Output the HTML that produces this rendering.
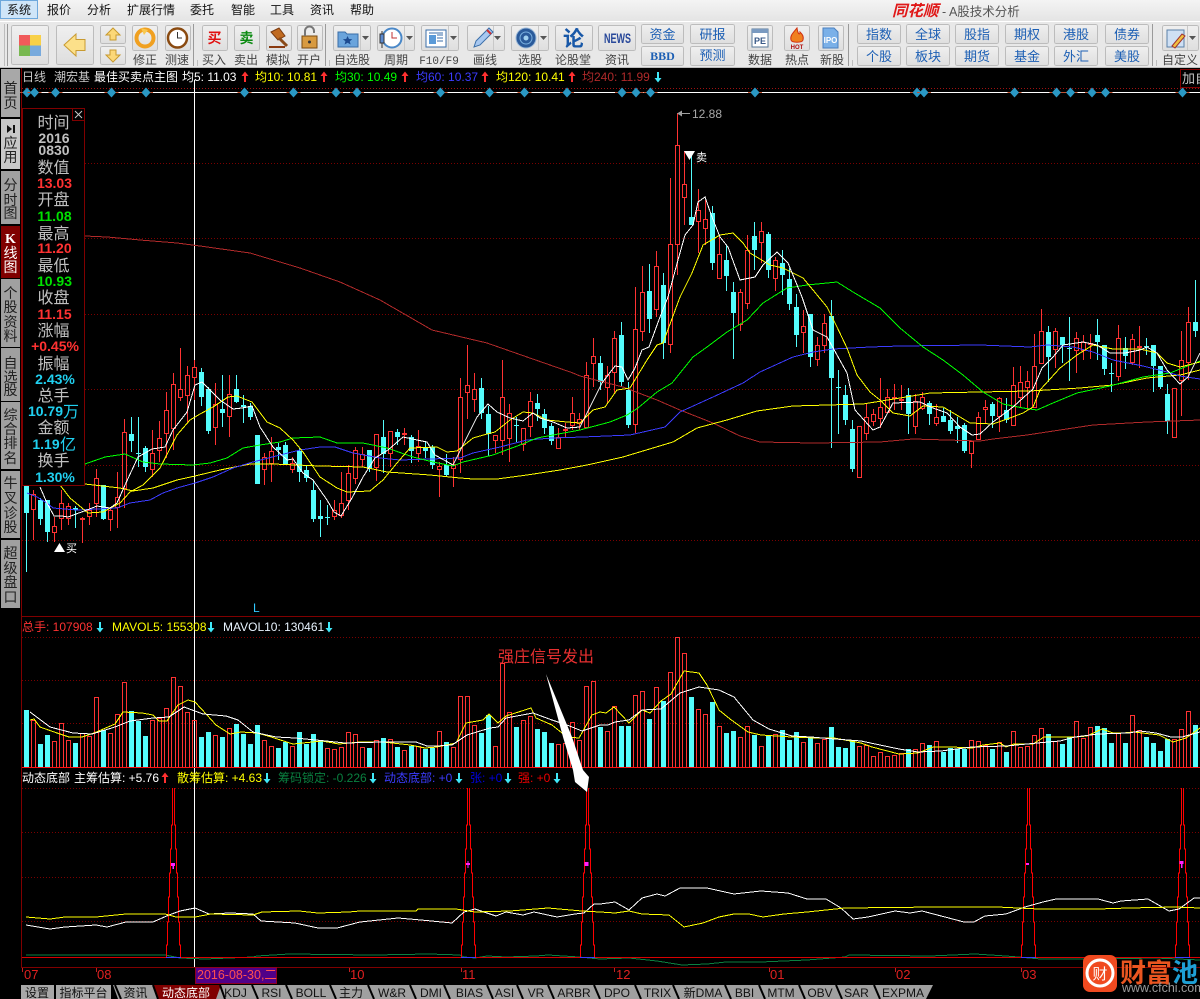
<!DOCTYPE html>
<html><head><meta charset="utf-8"><title>同花顺 A股技术分析</title>
<style>
html,body{margin:0;padding:0;background:#000;width:1200px;height:999px;overflow:hidden}
svg{display:block}
text{font-family:"Liberation Sans","Noto Sans CJK SC",sans-serif;font-size:12px}
.l{fill:#444;text-anchor:middle;font-size:12px}
.m{fill:#111;font-size:12px}
.b{fill:#1c5fb4;text-anchor:middle;font-size:13px}
.t{fill:#222;text-anchor:middle;font-size:14px}
.g{fill:#c0c0c0;text-anchor:middle;font-size:16px}
.n{font-weight:bold;text-anchor:middle;font-size:14px}
.k{fill:#111;text-anchor:middle;font-size:12px}
.a{fill:#e02020;font-size:13px}
</style></head><body>
<svg width="1200" height="999" viewBox="0 0 1200 999" xmlns="http://www.w3.org/2000/svg">
<defs>
<linearGradient id="mg" x1="0" y1="0" x2="0" y2="1"><stop offset="0" stop-color="#f4f4f4"/><stop offset="1" stop-color="#e4e4e4"/></linearGradient>
<linearGradient id="bg" x1="0" y1="0" x2="0" y2="1"><stop offset="0" stop-color="#f0f0f0"/><stop offset="1" stop-color="#dedede"/></linearGradient>
<path id="up" d="M0-5.500L3.500-1H1V5H-1V-1H-3.500z" fill="#ff3030"/>
<path id="dn" d="M0 5.500L3.500 1H1V-5H-1V1H-3.500z" fill="#40e8f8"/>
<g id="dm"><path d="M-7 0H7" stroke="#c05030"/><path d="M0-5L4.500 0 0 5-4.500 0z" fill="#2a98c4"/></g>
<path id="sp" fill="none" stroke="#ff0000" shape-rendering="crispEdges" d="M-7 957V945H-6V922H-5V897H-4V873H-3V849H-2V825H-1V788M7 957V945H6V922H5V897H4V873H3V849H2V825H1V788"/>
</defs>

<!-- menu + toolbar -->
<rect width="1200" height="21" fill="url(#mg)"/>
<rect y="21" width="1200" height="47" fill="#e8e8e8"/>
<path d="M0 21.500H1200" stroke="#fff"/><path d="M0 67.500H1200" stroke="#bdbdbd"/>
<rect x=".5" y=".5" width="37" height="18" fill="#cfe5f8" stroke="#6ea8dc"/>
<text class="m" x="7" y="14">系统</text><text class="m" x="47" y="14">报价</text><text class="m" x="87" y="14">分析</text><text class="m" x="127" y="14">扩展行情</text><text class="m" x="190" y="14">委托</text><text class="m" x="231" y="14">智能</text><text class="m" x="270" y="14">工具</text><text class="m" x="310" y="14">资讯</text><text class="m" x="350" y="14">帮助</text>
<text x="892" y="16" style="font-size:15.500px;font-weight:bold;font-style:italic;fill:#e01818">同花顺</text>
<text x="942" y="16" style="font-size:12.500px;fill:#555">- A股技术分析</text>

<g fill="url(#bg)" stroke="#bcbcbc" shape-rendering="crispEdges">
<rect x="11.500" y="25.500" width="37" height="39" rx="2"/><rect x="56.500" y="25.500" width="37" height="39" rx="2"/>
<rect x="100.500" y="25.500" width="25" height="18" rx="2"/><rect x="100.500" y="46.500" width="25" height="18" rx="2"/>
<rect x="132.500" y="25.500" width="25" height="25" rx="2"/><rect x="165.500" y="25.500" width="25" height="25" rx="2"/>
<rect x="202.500" y="25.500" width="25" height="25" rx="2"/><rect x="234.500" y="25.500" width="25" height="25" rx="2"/><rect x="266.500" y="25.500" width="25" height="25" rx="2"/><rect x="297.500" y="25.500" width="25" height="25" rx="2"/>
<rect x="333.500" y="25.500" width="37" height="25" rx="2"/><rect x="377.500" y="25.500" width="37" height="25" rx="2"/><rect x="421.500" y="25.500" width="37" height="25" rx="2"/><rect x="467.500" y="25.500" width="37" height="25" rx="2"/><rect x="511.500" y="25.500" width="37" height="25" rx="2"/><rect x="555.500" y="25.500" width="37" height="25" rx="2"/>
<rect x="598.500" y="25.500" width="37" height="25" rx="2"/>
<rect x="641.500" y="24.500" width="42" height="19" rx="2"/><rect x="641.500" y="46.500" width="42" height="19" rx="2"/><rect x="690.500" y="24.500" width="44" height="19" rx="2"/><rect x="690.500" y="46.500" width="44" height="19" rx="2"/>
<rect x="747.500" y="25.500" width="25" height="25" rx="2"/><rect x="784.500" y="25.500" width="25" height="25" rx="2"/><rect x="818.500" y="25.500" width="25" height="25" rx="2"/>
<rect x="857.500" y="24.500" width="43" height="19" rx="2"/><rect x="906.500" y="24.500" width="43" height="19" rx="2"/><rect x="955.500" y="24.500" width="43" height="19" rx="2"/><rect x="1005.500" y="24.500" width="43" height="19" rx="2"/><rect x="1054.500" y="24.500" width="43" height="19" rx="2"/><rect x="1105.500" y="24.500" width="43" height="19" rx="2"/>
<rect x="857.500" y="46.500" width="43" height="19" rx="2"/><rect x="906.500" y="46.500" width="43" height="19" rx="2"/><rect x="955.500" y="46.500" width="43" height="19" rx="2"/><rect x="1005.500" y="46.500" width="43" height="19" rx="2"/><rect x="1054.500" y="46.500" width="43" height="19" rx="2"/><rect x="1105.500" y="46.500" width="43" height="19" rx="2"/>
<rect x="1162.500" y="25.500" width="36" height="25" rx="2"/>
</g>
<path d="M7.500 24V66M193.500 24V66M325.500 24V66M848.500 24V66M1152.500 24V66" stroke="#9a9a9a" shape-rendering="crispEdges"/>
<path d="M4.500 24V66M197.500 60V66M329.500 60V66M852.500 60V66M1156.500 60V66" stroke="#bdbdbd" shape-rendering="crispEdges"/>
<path d="M360.500 26V50M404.500 26V50M448.500 26V50M493.500 26V50M538.500 26V50M1187.500 26V50" stroke="#c8c8c8" shape-rendering="crispEdges"/>
<path d="M362 36h7l-3.500 4zM406 36h7l-3.500 4zM450 36h7l-3.500 4zM494 36h7l-3.500 4zM540 36h7l-3.500 4zM1189 36h7l-3.500 4z" fill="#555"/>
<!-- grid logo -->
<rect x="19" y="35" width="11" height="10.500" fill="#f05a5a"/><rect x="30" y="35" width="11" height="10.500" fill="#f8d048"/><rect x="19" y="45.500" width="11" height="10.500" fill="#78b850"/><rect x="30" y="45.500" width="11" height="10.500" fill="#78aadd"/>
<path d="M64 45L76 34V39.500H85V50.500H76V56z" fill="#fce08a" stroke="#c89a30"/>
<path d="M113 28L120 35H116V40H110V35H106z" fill="#fcd878" stroke="#c89a30"/>
<path d="M113 62L120 55H116V50H110V55H106z" fill="#fcd878" stroke="#c89a30"/>
<circle cx="145" cy="38" r="8.500" fill="none" stroke="#f0a020" stroke-width="4"/><path d="M141 28l7 2-4 5z" fill="#f8c850"/>
<circle cx="177.500" cy="38" r="9.500" fill="#fff" stroke="#8a4a10" stroke-width="2.500"/><path d="M177.500 32V38H182" stroke="#333" fill="none"/>
<text x="214.500" y="43" text-anchor="middle" style="font-size:14px;font-weight:bold;fill:#e01010">买</text>
<text x="246.500" y="43" text-anchor="middle" style="font-size:14px;font-weight:bold;fill:#0a8a10">卖</text>
<path d="M271 32L279 28 285 36 278 40z" fill="#c06a20" stroke="#7a3a10"/><path d="M279 38L287 46" stroke="#8a4a18" stroke-width="3"/><path d="M269 47H285" stroke="#8a3a10" stroke-width="2"/>
<rect x="302" y="36" width="15" height="12" fill="#d89a40" stroke="#7a4a10"/><path d="M305 36V31a4.500 4.500 0 0 1 9 0V33" fill="none" stroke="#777" stroke-width="2"/><circle cx="309.500" cy="42" r="1.500" fill="#333"/>
<path d="M338 32h7l2 2h11v13h-20z" fill="#6aa4dc" stroke="#3a6ea8"/><path d="M347.500 36l1.500 3 3.300.3-2.500 2 .8 3.200-3-1.700-3 1.700.8-3.200-2.500-2 3.300-.3z" fill="#1c4a90"/>
<circle cx="392" cy="38" r="9.500" fill="#fff" stroke="#4a88c8" stroke-width="2"/><path d="M392 32V38H397" stroke="#c03030" fill="none"/><path d="M382 31V48" stroke="#333"/><rect x="380" y="34" width="4" height="9" fill="#5a8ad0" stroke="#333"/>
<rect x="426" y="30" width="20" height="17" fill="#fff" stroke="#3a6ea8"/><rect x="429" y="35" width="7" height="9" fill="#5a9ad8"/><path d="M437 35h6M437 38h6M437 41h6M429 33h14" stroke="#3a6ea8"/>
<path d="M474 47L476 41 489 28 493 32 480 45z" fill="#a8c8f0" stroke="#3a6ea8"/><path d="M487 30l4 4" stroke="#d03030" stroke-width="2"/>
<circle cx="526" cy="38" r="10" fill="#2a5a9a" stroke="#9ab8d8"/><circle cx="526" cy="38" r="6" fill="none" stroke="#7ab0e0"/><circle cx="526" cy="38" r="2.500" fill="#a0d0f0"/>
<text x="573.500" y="46" text-anchor="middle" style="font-size:21px;font-weight:bold;fill:#1858a8">论</text>
<text x="604" y="43" textLength="27" lengthAdjust="spacingAndGlyphs" style="font-size:14px;font-weight:bold;fill:#28489a">NEWS</text>
<text class="b" x="662.500" y="39">资金</text><text class="b" x="712.500" y="39">研报</text>
<text x="662.500" y="60" text-anchor="middle" style="font-size:12px;font-weight:bold;font-family:'Liberation Serif',serif;fill:#1c5fb4">BBD</text><text class="b" x="712.500" y="60">预测</text>
<rect x="752" y="29" width="16" height="18" fill="#fff" stroke="#5a7a9a"/><rect x="752" y="29" width="16" height="4" fill="#7a9ac0"/><text x="760" y="44" text-anchor="middle" style="font-size:9px;font-weight:bold;fill:#3a5a88">PE</text>
<path d="M797 28C792 34 790 36 791 40 792 43 802 43 803 40 804 36 802 34 800 32 800 35 798 35 797 28z" fill="#f08020" stroke="#d03010"/>
<text x="797" y="49" text-anchor="middle" style="font-size:6px;font-weight:bold;fill:#b01010">HOT</text>
<path d="M823 28h11l4 4v16h-15z" fill="#7ab0e8" stroke="#4a80c0"/><text x="830.500" y="43" text-anchor="middle" style="font-size:8px;font-weight:bold;fill:#fff">IPO</text>
<rect x="1167" y="30" width="17" height="17" fill="#cfe0f4" stroke="#5a80a8"/><path d="M1172 46l10-12 3 2-10 12z" fill="#f0c040" stroke="#a03030"/>
<text class="b" x="879" y="39">指数</text><text class="b" x="928" y="39">全球</text><text class="b" x="977" y="39">股指</text><text class="b" x="1027" y="39">期权</text><text class="b" x="1076" y="39">港股</text><text class="b" x="1127" y="39">债券</text>
<text class="b" x="879" y="61">个股</text><text class="b" x="928" y="61">板块</text><text class="b" x="977" y="61">期货</text><text class="b" x="1027" y="61">基金</text><text class="b" x="1076" y="61">外汇</text><text class="b" x="1127" y="61">美股</text>
<text class="l" x="145" y="64">修正</text><text class="l" x="177" y="64">测速</text><text class="l" x="214" y="64">买入</text><text class="l" x="246" y="64">卖出</text><text class="l" x="278" y="64">模拟</text><text class="l" x="309" y="64">开户</text><text class="l" x="352" y="64">自选股</text><text class="l" x="396" y="64">周期</text><text x="439" y="64" text-anchor="middle" style="font-family:'Liberation Mono',monospace;font-size:11px;fill:#444">F10/F9</text><text class="l" x="485" y="64">画线</text><text class="l" x="530" y="64">选股</text><text class="l" x="573" y="64">论股堂</text><text class="l" x="617" y="64">资讯</text><text class="l" x="760" y="64">数据</text><text class="l" x="797" y="64">热点</text><text class="l" x="832" y="64">新股</text><text class="l" x="1180" y="64">自定义</text>

<!-- left tabs -->
<g shape-rendering="crispEdges">
<rect x="1" y="69" width="19" height="48" fill="#a8a8a8"/><rect x="1" y="119" width="19" height="50" fill="#c8c8c8"/><rect x="1" y="171" width="19" height="53" fill="#a0a0a0"/><rect x="1" y="226" width="19" height="52" fill="#800000"/><rect x="1" y="279" width="19" height="68" fill="#a0a0a0"/><rect x="1" y="348" width="19" height="53" fill="#a0a0a0"/><rect x="1" y="402" width="19" height="67" fill="#a0a0a0"/><rect x="1" y="471" width="19" height="67" fill="#a0a0a0"/><rect x="1" y="540" width="19" height="68" fill="#a0a0a0"/>
</g>
<text class="t" x="10.500" y="93">首</text><text class="t" x="10.500" y="108">页</text>
<path d="M7 125v8l5-4zM13 125v8h2v-8z" fill="#111"/><text class="t" x="10.500" y="148">应</text><text class="t" x="10.500" y="162">用</text>
<text class="t" x="10.500" y="190">分</text><text class="t" x="10.500" y="205">时</text><text class="t" x="10.500" y="218">图</text>
<text x="10.500" y="243" text-anchor="middle" style="font-family:'Liberation Serif',serif;font-weight:bold;font-size:14px;fill:#fff">K</text><text class="t" x="10.500" y="258" style="fill:#fff">线</text><text class="t" x="10.500" y="272" style="fill:#fff">图</text>
<text class="t" x="10.500" y="298">个</text><text class="t" x="10.500" y="312">股</text><text class="t" x="10.500" y="327">资</text><text class="t" x="10.500" y="341">料</text>
<text class="t" x="10.500" y="368">自</text><text class="t" x="10.500" y="382">选</text><text class="t" x="10.500" y="395">股</text>
<text class="t" x="10.500" y="420">综</text><text class="t" x="10.500" y="434">合</text><text class="t" x="10.500" y="448">排</text><text class="t" x="10.500" y="463">名</text>
<text class="t" x="10.500" y="488">牛</text><text class="t" x="10.500" y="503">叉</text><text class="t" x="10.500" y="518">诊</text><text class="t" x="10.500" y="532">股</text>
<text class="t" x="10.500" y="558">超</text><text class="t" x="10.500" y="573">级</text><text class="t" x="10.500" y="587">盘</text><text class="t" x="10.500" y="602">口</text>

<!-- frames and grids -->
<g fill="none" shape-rendering="crispEdges">
<path d="M21.500 68V968" stroke="#800000"/>
<path d="M22 616.500H1200M22 967.500H1200" stroke="#800000"/>
<path d="M22 88.500H1200" stroke="#a01010" stroke-dasharray="1 2"/>
<path d="M22 163.500H1200M22 238.500H1200M22 314.500H1200M22 389.500H1200M22 465.500H1200M22 540.500H1200M22 637.500H1200M22 680.500H1200M22 723.500H1200M22 788.500H1200M22 832.500H1200M22 877.500H1200M22 921.500H1200" stroke="#7a0000" stroke-dasharray="1 2"/>
<path d="M194.500 80V967" stroke="#fff"/>
<path d="M22 92.500H1200" stroke="#fff"/>
</g>
<use href="#dm" x="27" y="92.500"/><use href="#dm" x="34.500" y="92.500"/><use href="#dm" x="55.500" y="92.500"/><use href="#dm" x="111.500" y="92.500"/><use href="#dm" x="146" y="92.500"/><use href="#dm" x="244.500" y="92.500"/><use href="#dm" x="293.500" y="92.500"/><use href="#dm" x="336" y="92.500"/><use href="#dm" x="357" y="92.500"/><use href="#dm" x="440.500" y="92.500"/><use href="#dm" x="489.500" y="92.500"/><use href="#dm" x="524.500" y="92.500"/><use href="#dm" x="567" y="92.500"/><use href="#dm" x="622" y="92.500"/><use href="#dm" x="636" y="92.500"/><use href="#dm" x="650.500" y="92.500"/><use href="#dm" x="755" y="92.500"/><use href="#dm" x="917" y="92.500"/><use href="#dm" x="924" y="92.500"/><use href="#dm" x="1014.500" y="92.500"/><use href="#dm" x="1056.500" y="92.500"/><use href="#dm" x="1070.500" y="92.500"/><use href="#dm" x="1092" y="92.500"/><use href="#dm" x="1105.500" y="92.500"/><use href="#dm" x="1182.500" y="92.500"/>

<!-- legend -->
<text x="22" y="81" style="fill:#c8c8c8">日线</text><text x="54" y="81" style="fill:#c8c8c8">潮宏基</text><text x="94" y="81" style="fill:#fff">最佳买卖点主图</text>
<text x="182" y="81" style="fill:#fff">均5: 11.03</text><use href="#up" x="245" y="77"/>
<text x="255" y="81" style="fill:#ffff00">均10: 10.81</text><use href="#up" x="324" y="77"/>
<text x="335" y="81" style="fill:#00ff00">均30: 10.49</text><use href="#up" x="405" y="77"/>
<text x="416" y="81" style="fill:#3c3cff">均60: 10.37</text><use href="#up" x="485" y="77"/>
<text x="496" y="81" style="fill:#ffff00">均120: 10.41</text><use href="#up" x="572" y="77"/>
<text x="582" y="81" style="fill:#b02a2a">均240: 11.99</text><use href="#dn" x="658" y="77"/>
<rect x="1180.500" y="69.500" width="20" height="18" fill="#000" stroke="#800000"/><text x="1182" y="83" style="fill:#c8c8c8;font-size:13px">加自</text>

<!-- candles -->
<g shape-rendering="crispEdges">
<path fill="none" stroke="#ff3232" d="M33.500 490V540M54.500 517V542M61.500 490V530M68.500 503V525M82.500 517V543M89.500 503V525M96.500 469V517M110.500 507V531M117.500 472V528M124.500 419V508M152.500 430V477M159.500 421V462M166.500 392V458M173.500 373V450M180.500 348V401M187.500 366V423M194.500 360V400M215.500 383V445M229.500 375V437M264.500 453V485M271.500 437V482M292.500 457V473M334.500 500V520M341.500 472V518M348.500 465V510M355.500 447V484M362.500 447V467M376.500 434V481M390.500 431V467M404.500 428V445M418.500 430V462M439.500 462V497M453.500 457V487M460.500 378V473M467.500 345V419M474.500 373V412M495.500 435V453M502.500 360V455M509.500 404V462M523.500 428V451M530.500 392V437M558.500 428V449M565.500 423V437M572.500 397V430M579.500 413V430M586.500 362V427M593.500 338V387M607.500 366V403M614.500 331V393M635.500 287V433M642.500 266V341M656.500 251V317M670.500 178V353M677.500 113V275M684.500 151V225M698.500 189V253M705.500 200V245M719.500 237V278M740.500 289V331M747.500 235V309M761.500 222V263M775.500 257V291M803.500 310V353M817.500 337V366M824.500 314V353M866.500 403V440M873.500 409V426M880.500 378V428M887.500 389V412M894.500 384V410M901.500 385V410M915.500 394V434M922.500 392V410M936.500 404V426M971.500 441V468M978.500 412V439M985.500 400V423M999.500 397V432M1013.500 367V425M1020.500 366V407M1027.500 371V410M1034.500 334V407M1041.500 309V363M1055.500 328V368M1076.500 332V373M1083.500 335V360M1090.500 334V359M1118.500 325V381M1132.500 334V365M1139.500 326V368M1174.500 388V437M1181.500 331V416M1188.500 307V380"/>
<path fill="#000" stroke="#ff3232" d="M31.500 494.500h4v15h-4zM52.500 526.500h4v6h-4zM59.500 503.500h4v15h-4zM66.500 506.500h4v12h-4zM80.500 518.500h4v1h-4zM87.500 510.500h4v6h-4zM94.500 478.500h4v25h-4zM108.500 510.500h4v9h-4zM115.500 497.500h4v10h-4zM122.500 432.500h4v56h-4zM150.500 453.500h4v16h-4zM157.500 438.500h4v12h-4zM164.500 410.500h4v23h-4zM171.500 384.500h4v44h-4zM178.500 389.500h4v8h-4zM185.500 375.500h4v20h-4zM192.500 367.500h4v10h-4zM213.500 404.500h4v23h-4zM227.500 394.500h4v22h-4zM262.500 457.500h4v12h-4zM269.500 451.500h4v12h-4zM290.500 463.500h4v6h-4zM332.500 510.500h4v6h-4zM339.500 503.500h4v12h-4zM346.500 473.500h4v27h-4zM353.500 450.500h4v28h-4zM360.500 454.500h4v5h-4zM374.500 434.500h4v33h-4zM388.500 431.500h4v22h-4zM402.500 433.500h4v1h-4zM416.500 446.500h4v7h-4zM437.500 466.500h4v3h-4zM451.500 464.500h4v4h-4zM458.500 397.500h4v62h-4zM465.500 385.500h4v7h-4zM472.500 389.500h4v10h-4zM493.500 435.500h4v5h-4zM500.500 397.500h4v43h-4zM507.500 413.500h4v25h-4zM521.500 428.500h4v16h-4zM528.500 401.500h4v25h-4zM556.500 437.500h4v11h-4zM563.500 429.500h4v1h-4zM570.500 413.500h4v12h-4zM577.500 419.500h4v4h-4zM584.500 375.500h4v52h-4zM591.500 356.500h4v7h-4zM605.500 375.500h4v12h-4zM612.500 338.500h4v34h-4zM633.500 329.500h4v95h-4zM640.500 292.500h4v39h-4zM654.500 266.500h4v43h-4zM668.500 244.500h4v100h-4zM675.500 145.500h4v99h-4zM682.500 184.500h4v13h-4zM696.500 210.500h4v11h-4zM703.500 219.500h4v9h-4zM717.500 254.500h4v24h-4zM738.500 292.500h4v32h-4zM745.500 250.500h4v53h-4zM759.500 231.500h4v11h-4zM773.500 260.500h4v18h-4zM801.500 326.500h4v6h-4zM815.500 345.500h4v14h-4zM822.500 323.500h4v22h-4zM857.500 426.500h4v51h-4zM864.500 417.500h4v16h-4zM871.500 414.500h4v7h-4zM878.500 407.500h4v11h-4zM885.500 397.500h4v15h-4zM892.500 397.500h4v1h-4zM899.500 399.500h4v1h-4zM913.500 401.500h4v25h-4zM920.500 397.500h4v11h-4zM934.500 417.500h4v6h-4zM969.500 441.500h4v12h-4zM976.500 417.500h4v22h-4zM983.500 407.500h4v2h-4zM997.500 398.500h4v18h-4zM1011.500 385.500h4v40h-4zM1018.500 382.500h4v15h-4zM1025.500 381.500h4v6h-4zM1032.500 366.500h4v41h-4zM1039.500 331.500h4v32h-4zM1053.500 331.500h4v18h-4zM1074.500 338.500h4v12h-4zM1081.500 342.500h4v8h-4zM1088.500 343.500h4v1h-4zM1116.500 338.500h4v38h-4zM1130.500 339.500h4v23h-4zM1137.500 346.500h4v1h-4zM1172.500 388.500h4v49h-4zM1179.500 360.500h4v20h-4zM1186.500 322.500h4v40h-4z"/>
<path fill="none" stroke="#54fcfc" d="M26.500 486V572M40.500 498V525M47.500 500V542M75.500 506V528M103.500 485V520M131.500 417V452M138.500 417V467M145.500 446V472M201.500 368V406M208.500 387V434M222.500 375V427M236.500 375V403M243.500 395V423M250.500 403V420M278.500 443V460M285.500 442V464M299.500 448V482M306.500 466V482M313.500 480V522M320.500 500V537M327.500 505V525M369.500 450V472M383.500 420V473M397.500 429V445M411.500 435V463M425.500 442V458M432.500 445V469M446.500 454V477M481.500 378V419M488.500 406V456M516.500 417V442M537.500 394V421M544.500 409V434M551.500 423V445M600.500 356V390M621.500 322V387M628.500 382V428M649.500 264V333M663.500 273V359M691.500 151V225M712.500 206V270M726.500 245V291M733.500 282V359M754.500 222V270M768.500 232V278M782.500 250V295M789.500 268V310M796.500 294V347M810.500 314V367M831.500 300V448M838.500 370V434M845.500 385V425M852.500 420V472M908.500 388V434M929.500 401V425M943.500 408V422M950.500 410V434M957.500 417V443M964.500 423V453M992.500 402V428M1006.500 398V423M1048.500 326V382M1062.500 337V363M1069.500 317V381M1097.500 319V360M1104.500 345V375M1111.500 363V392M1125.500 337V369M1146.500 338V355M1153.500 345V392M1160.500 366V389M1167.500 384V434M1195.500 280V337"/>
<path fill="#54fcfc" d="M24 486h5v27h-5zM38 500h5v19h-5zM45 500h5v32h-5zM73 508h5v2h-5zM101 485h5v34h-5zM129 434h5v7h-5zM136 453h5v1h-5zM143 448h5v19h-5zM199 372h5v25h-5zM206 389h5v42h-5zM220 409h5v4h-5zM234 389h5v13h-5zM241 405h5v2h-5zM248 406h5v11h-5zM255 435h5v49h-5zM276 447h5v3h-5zM283 445h5v19h-5zM297 451h5v21h-5zM304 470h5v8h-5zM311 490h5v29h-5zM318 516h5v3h-5zM325 517h5v1h-5zM367 450h5v19h-5zM381 437h5v17h-5zM395 432h5v5h-5zM409 437h5v14h-5zM423 448h5v3h-5zM430 447h5v18h-5zM444 465h5v10h-5zM479 388h5v25h-5zM486 414h5v20h-5zM514 425h5v1h-5zM535 403h5v6h-5zM542 414h5v14h-5zM549 426h5v15h-5zM598 363h5v19h-5zM619 335h5v47h-5zM626 390h5v35h-5zM647 291h5v28h-5zM661 285h5v58h-5zM689 217h5v8h-5zM710 213h5v50h-5zM724 260h5v16h-5zM731 292h5v21h-5zM752 236h5v14h-5zM766 234h5v36h-5zM780 263h5v12h-5zM787 279h5v25h-5zM794 307h5v28h-5zM808 314h5v43h-5zM829 316h5v62h-5zM836 387h5v1h-5zM843 395h5v25h-5zM850 429h5v40h-5zM906 395h5v19h-5zM927 403h5v11h-5zM941 416h5v6h-5zM948 420h5v11h-5zM955 426h5v3h-5zM962 425h5v26h-5zM990 404h5v12h-5zM1004 410h5v10h-5zM1046 332h5v25h-5zM1060 337h5v8h-5zM1067 348h5v1h-5zM1095 335h5v7h-5zM1102 345h5v24h-5zM1109 373h5v1h-5zM1123 348h5v8h-5zM1144 346h5v1h-5zM1151 345h5v21h-5zM1158 366h5v21h-5zM1165 394h5v27h-5zM1193 322h5v9h-5z"/>
</g>

<!-- moving averages -->
<g fill="none" stroke-width="1" shape-rendering="crispEdges">
<polyline stroke="#b02a2a" points="85,236 107,237 140,240 177,243 200,246 250,253 300,268 340,282 380,300 432,330 487,343 527,357 573,373 580,376 623,387 657,400 680,410 713,423 740,436 760,442 813,443 880,442 913,439 980,441 993,439 1027,435 1060,430 1093,425 1147,422 1200,420"/>
<polyline stroke="#ffff00" points="85,484 120,488 133,491 153,488 177,480 195,476 220,470 250,464 273,464 320,466 363,467 387,472 430,475 460,478 473,479 497,479 527,475 560,470 587,465 623,457 653,448 673,442 697,428 727,420 757,411 793,406 863,404 900,398 930,393 980,392 1030,391 1080,388 1113,385 1147,378 1180,375 1200,370"/>
<polyline stroke="#3c3cff" points="27,493 37,497 47,503 53,508 77,510 117,508 130,503 150,500 163,493 177,488 195,483 213,477 233,468 253,462 280,455 300,450 320,447 335,447 353,453 380,458 400,460 460,458 473,453 500,447 527,440 553,438 583,437 630,435 665,427 680,412 713,397 743,383 760,372 793,357 813,352 833,349 870,347 900,346 980,345 1030,347 1047,345 1073,347 1093,352 1113,360 1143,366 1167,372 1180,376 1200,379"/>
<polyline stroke="#00ff00" points="85,464 105,457 125,454 143,462 160,464 193,465 210,463 227,458 243,448 260,445 280,442 293,438 320,437 337,443 363,443 387,448 413,457 433,462 453,466 463,462 493,455 520,445 537,438 553,435 580,430 610,422 627,415 638,408 657,392 672,383 693,357 707,347 727,332 747,320 763,303 787,288 807,285 837,282 853,292 880,308 900,328 923,347 943,360 963,375 983,392 1003,404 1023,408 1037,410 1053,403 1077,393 1110,386 1143,377 1170,373 1200,361"/>
<polyline stroke="#ffff00" points="60,485 70,498 88,513 103,512 120,503 130,492 143,485 160,468 177,435 190,420 200,414 213,407 228,397 237,396 252,402 267,422 280,428 293,440 303,452 320,477 337,488 347,492 370,491 383,480 397,463 410,448 437,447 447,452 457,451 473,438 487,434 495,432 510,420 523,412 533,413 547,420 567,422 580,423 593,410 605,407 617,390 630,388 647,360 657,345 663,343 680,297 692,273 703,245 720,235 733,233 743,243 750,253 770,265 783,268 803,278 813,290 827,307 837,327 847,348 857,375 870,392 880,400 893,413 910,416 923,406 943,407 960,417 970,423 993,424 1010,418 1023,413 1033,407 1040,390 1060,368 1077,355 1093,345 1113,349 1140,349 1157,353 1167,363 1180,367 1200,362"/>
<polyline stroke="#ffffff" points="40,487 47,503 54,516 62,516 68,517 87,510 97,506 110,508 117,503 125,485 138,457 152,449 165,447 173,430 187,412 195,385 202,382 220,400 233,409 242,408 252,406 260,427 273,447 287,460 293,459 303,473 313,480 320,490 327,500 334,512 341,516 352,498 363,477 375,458 388,450 403,437 417,440 427,442 435,455 453,465 462,447 477,417 488,404 497,412 510,418 523,421 533,413 540,418 553,422 567,428 580,427 590,407 602,383 615,366 622,367 628,380 635,368 642,350 649,347 660,317 668,297 678,260 685,235 693,225 698,202 705,197 712,217 720,237 728,247 740,280 755,277 763,265 777,252 788,263 802,297 813,330 827,337 847,373 855,410 873,430 880,427 893,403 920,402 933,408 947,413 960,427 972,435 980,434 993,422 1013,407 1033,389 1042,368 1053,357 1063,345 1083,342 1097,345 1110,353 1125,353 1140,350 1147,347 1157,353 1167,370 1180,384 1188,377 1200,353"/>
</g>

<!-- peak and signals -->
<path d="M678 113.500H690" stroke="#a0a0a0"/><path d="M677 113.500l5-3v6z" fill="#a0a0a0"/>
<text x="692" y="118" style="fill:#a8a8a8;font-size:12px">12.88</text>
<path d="M684 151h11l-5.500 9z" fill="#fff"/><text x="696" y="161" style="fill:#fff;font-size:11px">卖</text>
<path d="M54 552l5.500-9 5.500 9z" fill="#fff"/><text x="66" y="552" style="fill:#fff;font-size:11px">买</text>
<text x="253" y="612" style="fill:#30c8ff;font-size:12px">L</text>

<!-- info panel -->
<rect x="22.500" y="108.500" width="62" height="377" fill="#000" stroke="#800000"/>
<rect x="72.500" y="108.500" width="12" height="12" fill="#000" stroke="#800000"/>
<path d="M75 111l7 7M82 111l-7 7" stroke="#c8c8c8"/>
<text class="g" x="53.500" y="128">时间</text>
<text class="n" x="54" y="143" style="fill:#c0c0c0">2016</text>
<text class="n" x="54" y="155" style="fill:#c0c0c0">0830</text>
<text class="g" x="53.500" y="173">数值</text>
<text class="n" x="54.500" y="188" style="fill:#ff3232">13.03</text>
<text class="g" x="53.500" y="205">开盘</text>
<text class="n" x="54.500" y="221" style="fill:#00e000">11.08</text>
<text class="g" x="53.500" y="239">最高</text>
<text class="n" x="54.500" y="253" style="fill:#ff3232">11.20</text>
<text class="g" x="53.500" y="271">最低</text>
<text class="n" x="54.500" y="286" style="fill:#00e000">10.93</text>
<text class="g" x="53.500" y="303">收盘</text>
<text class="n" x="54.500" y="319" style="fill:#ff3232">11.15</text>
<text class="g" x="53.500" y="336">涨幅</text>
<text class="n" x="55" y="351" style="fill:#ff3232">+0.45%</text>
<text class="g" x="53.500" y="369">振幅</text>
<text class="n" x="55" y="384" style="fill:#20d0f0">2.43%</text>
<text class="g" x="53.500" y="401">总手</text>
<text class="n" x="45.500" y="416" style="fill:#20d0f0">10.79</text><text x="63" y="417" style="fill:#20d0f0;font-size:16px">万</text>
<text class="n" x="46" y="449" style="fill:#20d0f0">1.19</text><text x="60" y="450" style="fill:#20d0f0;font-size:16px">亿</text>
<text class="g" x="53.500" y="433">金额</text>
<text class="g" x="53.500" y="466">换手</text>
<text class="n" x="55" y="482" style="fill:#20d0f0">1.30%</text>

<!-- volume -->
<g shape-rendering="crispEdges">
<path fill="#54fcfc" d="M24 710h5V767h-5zM38 744h5V767h-5zM45 735h5V767h-5zM73 743h5V767h-5zM101 730h5V767h-5zM129 711h5V767h-5zM136 721h5V767h-5zM143 736h5V767h-5zM199 737h5V767h-5zM206 732h5V767h-5zM220 737h5V767h-5zM234 724h5V767h-5zM241 734h5V767h-5zM248 744h5V767h-5zM255 725h5V767h-5zM276 748h5V767h-5zM283 742h5V767h-5zM297 732h5V767h-5zM304 744h5V767h-5zM311 734h5V767h-5zM318 740h5V767h-5zM367 748h5V767h-5zM381 738h5V767h-5zM395 747h5V767h-5zM409 746h5V767h-5zM423 749h5V767h-5zM430 748h5V767h-5zM444 742h5V767h-5zM479 733h5V767h-5zM486 715h5V767h-5zM514 727h5V767h-5zM535 729h5V767h-5zM542 732h5V767h-5zM549 743h5V767h-5zM598 727h5V767h-5zM619 726h5V767h-5zM626 726h5V767h-5zM647 719h5V767h-5zM661 701h5V767h-5zM689 697h5V767h-5zM710 702h5V767h-5zM724 733h5V767h-5zM731 731h5V767h-5zM752 735h5V767h-5zM766 736h5V767h-5zM780 730h5V767h-5zM787 740h5V767h-5zM794 732h5V767h-5zM808 738h5V767h-5zM829 727h5V767h-5zM836 747h5V767h-5zM843 748h5V767h-5zM850 741h5V767h-5zM906 749h5V767h-5zM927 745h5V767h-5zM941 752h5V767h-5zM948 748h5V767h-5zM955 749h5V767h-5zM962 749h5V767h-5zM990 749h5V767h-5zM1004 752h5V767h-5zM1046 734h5V767h-5zM1060 744h5V767h-5zM1067 737h5V767h-5zM1095 726h5V767h-5zM1102 728h5V767h-5zM1109 743h5V767h-5zM1123 743h5V767h-5zM1144 737h5V767h-5zM1151 743h5V767h-5zM1158 751h5V767h-5zM1165 739h5V767h-5zM1193 725h5V767h-5z"/>
<path fill="none" stroke="#ff3232" d="M31.500 767V720.500h4V767M52.500 767V741.500h4V767M59.500 767V723.500h4V767M66.500 767V740.500h4V767M80.500 767V733.500h4V767M87.500 767V736.500h4V767M94.500 767V697.500h4V767M108.500 767V733.500h4V767M115.500 767V714.500h4V767M122.500 767V682.500h4V767M150.500 767V720.500h4V767M157.500 767V718.500h4V767M164.500 767V708.500h4V767M171.500 767V677.500h4V767M178.500 767V686.500h4V767M185.500 767V712.500h4V767M192.500 767V720.500h4V767M213.500 767V735.500h4V767M227.500 767V728.500h4V767M262.500 767V740.500h4V767M269.500 767V746.500h4V767M290.500 767V746.500h4V767M325.500 767V748.500h4V767M332.500 767V749.500h4V767M339.500 767V747.500h4V767M346.500 767V732.500h4V767M353.500 767V734.500h4V767M360.500 767V747.500h4V767M374.500 767V740.500h4V767M388.500 767V739.500h4V767M402.500 767V750.500h4V767M416.500 767V746.500h4V767M437.500 767V731.500h4V767M451.500 767V747.500h4V767M458.500 767V696.500h4V767M465.500 767V696.500h4V767M472.500 767V725.500h4V767M493.500 767V746.500h4V767M500.500 767V663.500h4V767M507.500 767V712.500h4V767M521.500 767V720.500h4V767M528.500 767V716.500h4V767M556.500 767V744.500h4V767M563.500 767V743.500h4V767M570.500 767V722.500h4V767M577.500 767V740.500h4V767M584.500 767V686.500h4V767M591.500 767V681.500h4V767M605.500 767V731.500h4V767M612.500 767V706.500h4V767M633.500 767V695.500h4V767M640.500 767V691.500h4V767M654.500 767V687.500h4V767M668.500 767V672.500h4V767M675.500 767V637.500h4V767M682.500 767V653.500h4V767M696.500 767V709.500h4V767M703.500 767V714.500h4V767M717.500 767V726.500h4V767M738.500 767V737.500h4V767M745.500 767V726.500h4V767M759.500 767V746.500h4V767M773.500 767V734.500h4V767M801.500 767V742.500h4V767M815.500 767V743.500h4V767M822.500 767V739.500h4V767M857.500 767V746.500h4V767M864.500 767V745.500h4V767M871.500 767V756.500h4V767M878.500 767V752.500h4V767M885.500 767V756.500h4V767M892.500 767V755.500h4V767M899.500 767V753.500h4V767M913.500 767V749.500h4V767M920.500 767V743.500h4V767M934.500 767V741.500h4V767M969.500 767V740.500h4V767M976.500 767V741.500h4V767M983.500 767V745.500h4V767M997.500 767V742.500h4V767M1011.500 767V731.500h4V767M1018.500 767V747.500h4V767M1025.500 767V746.500h4V767M1032.500 767V735.500h4V767M1039.500 767V728.500h4V767M1053.500 767V741.500h4V767M1074.500 767V721.500h4V767M1081.500 767V738.500h4V767M1088.500 767V727.500h4V767M1116.500 767V733.500h4V767M1130.500 767V715.500h4V767M1137.500 767V730.500h4V767M1172.500 767V739.500h4V767M1179.500 767V729.500h4V767M1186.500 767V711.500h4V767"/>
<path d="M22 767.500H1200" stroke="#ff1010"/>
</g>
<g fill="none" stroke-width="1" shape-rendering="crispEdges">
<polyline stroke="#ffff00" points="30,720 34,719 40,727 57,733 69,737 82,737 94,733 115,724 123,712 142,713 153,715 159,721 167,721 178,705 188,700 195,702 207,715 216,725 230,734 241,732 257,733 268,736 293,744 322,741 339,744 360,742 383,742 410,745 425,748 437,747 456,743 466,723 483,720 489,714 498,723 506,716 531,708 536,718 552,725 567,737 579,738 592,715 600,712 606,713 614,707 629,723 642,710 650,713 661,701 671,694 684,671 699,673 707,685 719,710 730,719 748,732 761,735 792,737 815,738 834,738 861,743 872,747 899,754 918,753 933,747 952,747 972,748 983,745 1000,743 1006,747 1014,744 1033,744 1044,737 1075,737 1087,736 1102,729 1113,733 1123,733 1134,732 1159,735 1173,742 1186,738 1200,728"/>
<polyline stroke="#ffffff" points="30,712 38,718 50,727 73,733 92,734 115,727 130,721 153,718 169,717 184,707 203,714 226,716 238,720 253,732 276,737 295,738 326,741 345,743 383,742 416,742 427,746 437,746 452,745 467,735 490,728 498,727 506,718 533,713 552,720 567,725 582,731 600,725 608,725 615,722 629,720 642,710 661,709 680,693 699,687 719,690 734,697 753,720 769,729 792,736 811,737 822,738 861,741 899,749 918,752 941,751 972,747 1006,746 1048,742 1060,741 1075,737 1098,734 1129,733 1140,731 1156,733 1171,737 1182,737 1200,732"/>
</g>
<text x="22" y="631" style="fill:#ff3232">总手: 107908</text><use href="#dn" x="100" y="627"/>
<text x="112" y="631" style="fill:#ffff00">MAVOL5: 155308</text><use href="#dn" x="211" y="627"/>
<text x="223" y="631" style="fill:#e8f4ff">MAVOL10: 130461</text><use href="#dn" x="329" y="627"/>
<text x="498" y="662" style="fill:#e83030;font-size:16px">强庄信号发出</text>

<!-- indicator -->
<polyline fill="none" stroke="#0a8040" stroke-width="1" shape-rendering="crispEdges" points="26,955 165,955 180,958 205,959 253,957 257,956 289,954 374,955 429,954 460,955 464,957 475,958 487,956 506,957 536,956 548,955 579,957 600,959 629,958 657,961 682,965 707,964 726,962 761,962 807,960 845,957 849,955 930,956 975,954 1006,956 1018,957 1041,959 1098,959 1156,958 1200,960"/>
<path d="M22 957.500H1200" stroke="#d80000" shape-rendering="crispEdges"/>
<path d="M166 957.500H181M461 957.500H476M580 957.500H595M1021 957.500H1036M1175 957.500H1190" stroke="#3c3cff" shape-rendering="crispEdges"/>
<use href="#sp" x="173.500"/><use href="#sp" x="468.500"/><use href="#sp" x="587.500"/><use href="#sp" x="1028.500"/><use href="#sp" x="1182.500"/>
<path d="M171 863h4v3h-4zM172.500 866h1.500v3h-1.500zM466 863h4v2h-4zM467.500 861h1v7h-1zM584.500 862h4v4h-4zM1026 863h3v2h-3zM1179.500 861h4v3h-4zM1181 864h1.500v4h-1.500z" fill="#ff20ff"/>
<g fill="none" stroke-width="1" shape-rendering="crispEdges">
<polyline stroke="#ffffff" points="26,925 50,929 65,927 96,925 107,927 126,922 153,922 169,915 180,911 195,908 209,914 230,913 253,914 261,921 295,923 318,928 337,928 360,922 398,918 421,920 452,923 464,912 475,909 496,916 506,912 523,915 534,912 557,917 575,914 584,913 594,904 600,904 615,902 629,910 642,898 657,894 665,896 680,888 707,888 734,894 761,891 788,893 807,899 826,899 841,908 853,919 868,917 895,911 910,913 922,911 945,917 964,922 974,922 985,916 1006,914 1025,907 1043,902 1056,899 1098,899 1113,903 1121,901 1148,899 1169,911 1179,909 1194,898 1200,898"/>
<polyline stroke="#ffff00" points="26,917 50,919 65,917 96,917 126,914 165,914 176,917 195,917 211,914 253,915 262,912 299,911 318,913 349,912 360,911 416,911 418,909 456,909 475,912 510,911 548,908 582,911 600,912 615,913 629,911 642,914 669,915 684,927 703,923 719,917 734,914 749,914 763,917 784,914 807,912 845,908 937,907 997,907 1039,909 1098,909 1129,908 1175,907 1200,908"/>
</g>
<text x="22" y="782" style="fill:#fff">动态底部</text><text x="74" y="782" style="fill:#fff">主筹估算: +5.76</text><use href="#up" x="165" y="778"/>
<text x="177" y="782" style="fill:#ffff00">散筹估算: +4.63</text><use href="#dn" x="267" y="778"/>
<text x="278" y="782" style="fill:#0a8040">筹码锁定: -0.226</text><use href="#dn" x="373" y="778"/>
<text x="384" y="782" style="fill:#3c3cff">动态底部: +0</text><use href="#dn" x="459" y="778"/>
<text x="470" y="782" style="fill:#0000dd">张: +0</text><use href="#dn" x="508" y="778"/>
<text x="518" y="782" style="fill:#ee0000">强: +0</text><use href="#dn" x="557" y="778"/>
<polygon points="546,674 572,737 583,770 589,777 587,792 575,782 573,770 563,737" fill="#ffffff"/>

<!-- axis -->
<path d="M22.500 968v4M96.500 968v4M349.500 968v4M461.500 968v4M614.500 968v4M769.500 968v4M895.500 968v4M1021.500 968v4" stroke="#c02020" shape-rendering="crispEdges"/>
<text class="a" x="24" y="979">07</text><text class="a" x="97" y="979">08</text><text class="a" x="350" y="979">10</text><text class="a" x="462" y="979">11</text><text class="a" x="616" y="979">12</text><text class="a" x="770" y="979">01</text><text class="a" x="896" y="979">02</text><text class="a" x="1022" y="979">03</text>
<rect x="195.500" y="967.500" width="81" height="16" fill="#500088" stroke="#900020"/>
<text x="197" y="979" style="fill:#ff5050;font-size:12.500px">2016-08-30,二</text>

<!-- bottom tabs -->
<g shape-rendering="crispEdges">
<rect x="21" y="985" width="33" height="14" fill="#a8a8a8"/><rect x="56" y="985" width="55" height="14" fill="#a8a8a8"/>
</g>
<polygon points="113,985 933,985 926,999 118,999" fill="#a0a0a0"/>
<polygon points="153,985 221,985 216,999 158,999" fill="#800000"/>
<path d="M115 985l6 14M153 985l5 14M220 985l5 14M252 985l6 14M286 985l6 14M330 985l6 14M368 985l6 14M410 985l6 14M444 985l6 14M487 985l6 14M517 985l6 14M548 985l6 14M594 985l6 14M635 985l6 14M673 985l6 14M725 985l6 14M759 985l6 14M799 985l6 14M836 985l6 14M874 985l6 14" stroke="#000" stroke-width="2" fill="none"/>
<text class="k" x="37" y="997">设置</text><text class="k" x="83.500" y="997">指标平台</text><text class="k" x="135.500" y="997">资讯</text>
<text class="k" x="186" y="997" style="fill:#fff">动态底部</text>
<text class="k" x="235.500" y="997">KDJ</text><text class="k" x="271.500" y="997">RSI</text><text class="k" x="311" y="997">BOLL</text><text class="k" x="351" y="997">主力</text><text class="k" x="392" y="997">W&amp;R</text><text class="k" x="431" y="997">DMI</text><text class="k" x="469.500" y="997">BIAS</text><text class="k" x="504.500" y="997">ASI</text><text class="k" x="536" y="997">VR</text><text class="k" x="574" y="997">ARBR</text><text class="k" x="617" y="997">DPO</text><text class="k" x="657.500" y="997">TRIX</text><text class="k" x="703" y="997">新DMA</text><text class="k" x="744.500" y="997">BBI</text><text class="k" x="781" y="997">MTM</text><text class="k" x="820" y="997">OBV</text><text class="k" x="856.500" y="997">SAR</text><text class="k" x="903" y="997">EXPMA</text>

<!-- watermark -->
<rect x="1083" y="955" width="34" height="37" rx="7" fill="#f04a20"/>
<circle cx="1100" cy="973" r="13" fill="none" stroke="#fff" stroke-width="3"/>
<text x="1100" y="979" text-anchor="middle" style="font-size:15px;fill:#fff">财</text>
<text x="1120" y="982" style="font-size:26px;font-weight:bold;fill:#ea5520">财富</text><text x="1172" y="982" style="font-size:26px;font-weight:bold;fill:#1ea0d6">池</text>
<text x="1122" y="992" style="font-size:12.500px;fill:#9a9a9a">www.cfchi.com</text>
</svg>
</body></html>
